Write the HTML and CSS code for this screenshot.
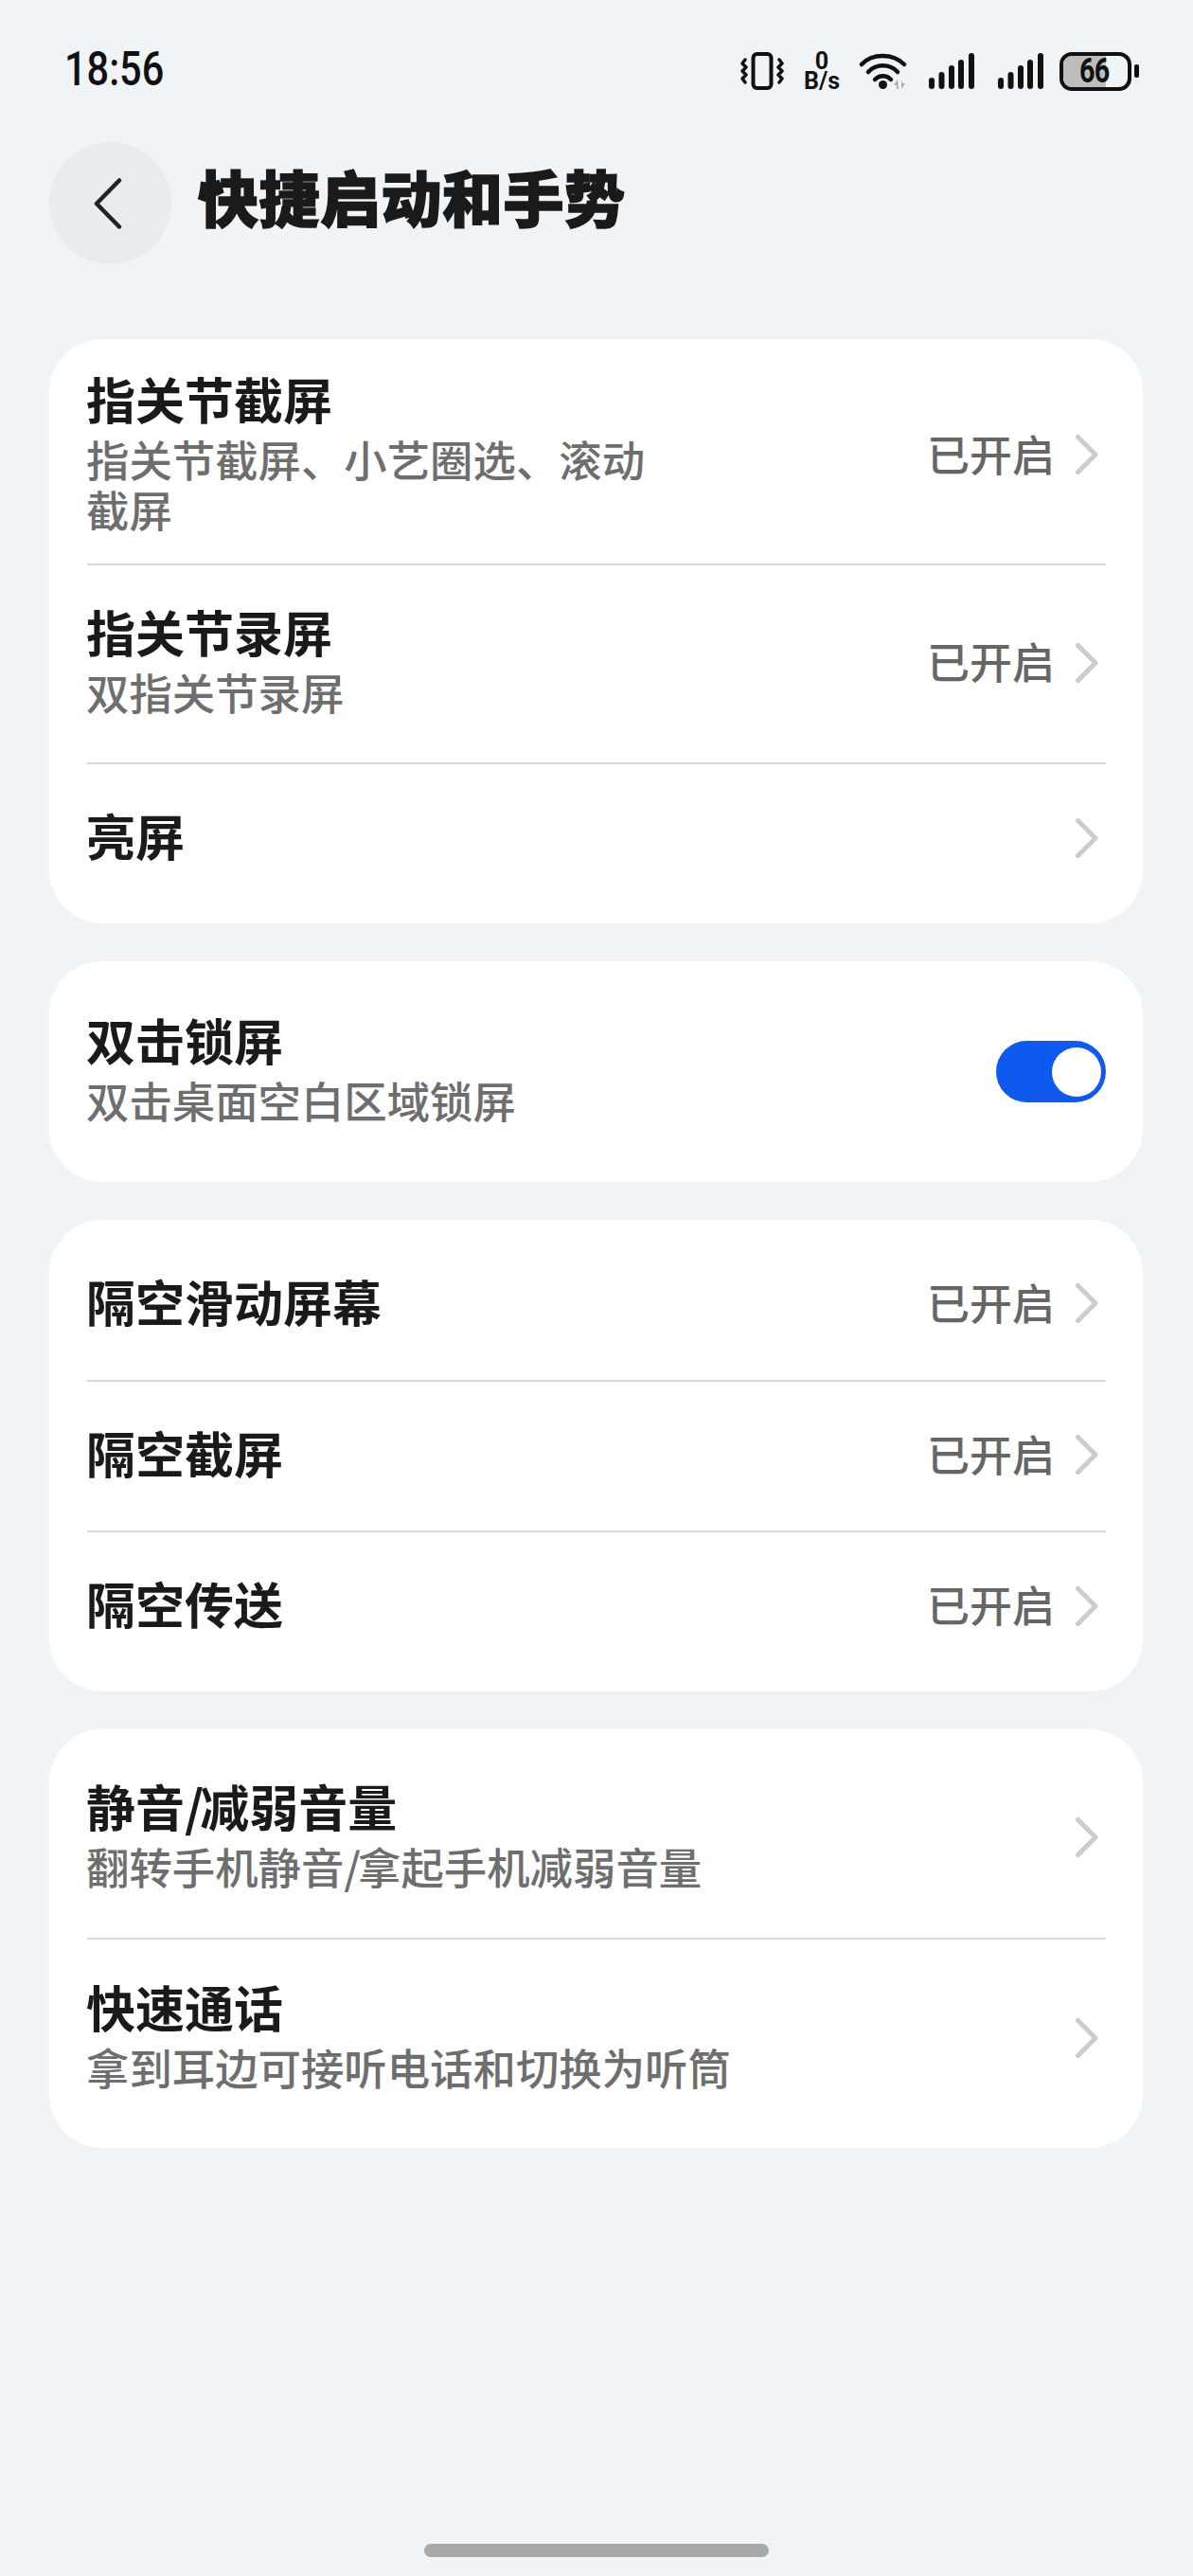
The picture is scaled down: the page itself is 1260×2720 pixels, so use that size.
FILE: index.html
```html
<!DOCTYPE html>
<html lang="zh-CN">
<head>
  <meta charset="UTF-8">
  <meta name="viewport" content="width=device-width, initial-scale=1.0">
  <title>快捷启动和手势</title>
  <link rel="stylesheet" href="styles.css">
</head>
<body>
  <div class="page">
    <div class="status">
      <span class="status__time">18:56</span>
      <div class="status__icons">
        <svg class="icon-vibrate" width="46" height="40" viewBox="0 0 46 40" fill="none" stroke="#111">
          <rect x="13.5" y="2" width="19" height="36" rx="4" stroke-width="4"/>
          <path d="M5 8l-3 4 4 4-4 4 4 4-4 4 3 4M41 8l3 4-4 4 4 4-4 4 4 4-3 4" stroke-width="3.500" stroke-linecap="round" stroke-linejoin="round"/>
        </svg>
        <div class="speed"><span>0</span><span>B/s</span></div>
        <svg class="icon-wifi" width="54" height="40" viewBox="0 0 54 40" fill="none" stroke="#111" stroke-width="4.5" stroke-linecap="round">
          <path d="M3 13C14 1 36 1 48 13"/>
          <path d="M10 21C18 12 33 12 41 21"/>
          <path d="M17 29C22 24 29 24 34 29"/>
          <circle cx="25.500" cy="34.500" r="4.500" fill="#111" stroke="none"/>
          <path d="M41 29l-4 6h3v4h2zM45 29v10l4-6h-3z" fill="#aaa" stroke="none"/>
        </svg>
        <svg class="icon-signal" width="48" height="40" viewBox="0 0 48 40" fill="#111">
          <rect x="0" y="27" width="6" height="12" rx="3"/>
          <rect x="10.500" y="21" width="6" height="18" rx="3"/>
          <rect x="21" y="14" width="6" height="25" rx="3"/>
          <rect x="31" y="8" width="6" height="31" rx="3"/>
          <rect x="42" y="1" width="6" height="38" rx="3"/>
        </svg>
        <svg class="icon-signal icon-signal--second" width="48" height="40" viewBox="0 0 48 40" fill="#111">
          <rect x="0" y="27" width="6" height="12" rx="3"/>
          <rect x="10.500" y="21" width="6" height="18" rx="3"/>
          <rect x="21" y="14" width="6" height="25" rx="3"/>
          <rect x="31" y="8" width="6" height="31" rx="3"/>
          <rect x="42" y="1" width="6" height="38" rx="3"/>
        </svg>
        <div class="battery">
          <div class="battery__body">
            <div class="battery__fill" style="width: 66%"></div>
            <span class="battery__num">66</span>
          </div>
          <div class="battery__nub"></div>
        </div>
      </div>
    </div>

    <header class="header">
      <div class="back">
        <svg width="30" height="54" viewBox="0 0 30 54" fill="none" stroke="#222" stroke-width="4.5" stroke-linecap="round" stroke-linejoin="round">
          <path d="M27 2.500L3 27l24 24.500"/>
        </svg>
      </div>
      <h1 class="header__title">快捷启动和手势</h1>
    </header>

    <main class="cards">
      <section class="card">
        <div class="row row--sub">
          <div class="row__text">
            <div class="row__title">指关节截屏</div>
            <div class="row__desc">指关节截屏、小艺圈选、滚动<br>截屏</div>
          </div>
          <div class="row__right"><span class="row__value">已开启</span><svg class="chev" width="24" height="42" viewBox="0 0 24 42" fill="none" stroke="#ccc" stroke-width="5" stroke-linecap="round" stroke-linejoin="round"><path d="M2.500 2.500L21 21 2.500 39.500"/></svg></div>
        </div>
        <div class="row row--sub">
          <div class="row__text">
            <div class="row__title">指关节录屏</div>
            <div class="row__desc">双指关节录屏</div>
          </div>
          <div class="row__right"><span class="row__value">已开启</span><svg class="chev" width="24" height="42" viewBox="0 0 24 42" fill="none" stroke="#ccc" stroke-width="5" stroke-linecap="round" stroke-linejoin="round"><path d="M2.500 2.500L21 21 2.500 39.500"/></svg></div>
        </div>
        <div class="row">
          <div class="row__text">
            <div class="row__title">亮屏</div>
          </div>
          <div class="row__right"><svg class="chev" width="24" height="42" viewBox="0 0 24 42" fill="none" stroke="#ccc" stroke-width="5" stroke-linecap="round" stroke-linejoin="round"><path d="M2.500 2.500L21 21 2.500 39.500"/></svg></div>
        </div>
      </section>

      <section class="card">
        <div class="row row--sub">
          <div class="row__text">
            <div class="row__title">双击锁屏</div>
            <div class="row__desc">双击桌面空白区域锁屏</div>
          </div>
          <div class="toggle"><div class="toggle__knob"></div></div>
        </div>
      </section>

      <section class="card">
        <div class="row">
          <div class="row__text">
            <div class="row__title">隔空滑动屏幕</div>
          </div>
          <div class="row__right"><span class="row__value">已开启</span><svg class="chev" width="24" height="42" viewBox="0 0 24 42" fill="none" stroke="#ccc" stroke-width="5" stroke-linecap="round" stroke-linejoin="round"><path d="M2.500 2.500L21 21 2.500 39.500"/></svg></div>
        </div>
        <div class="row">
          <div class="row__text">
            <div class="row__title">隔空截屏</div>
          </div>
          <div class="row__right"><span class="row__value">已开启</span><svg class="chev" width="24" height="42" viewBox="0 0 24 42" fill="none" stroke="#ccc" stroke-width="5" stroke-linecap="round" stroke-linejoin="round"><path d="M2.500 2.500L21 21 2.500 39.500"/></svg></div>
        </div>
        <div class="row">
          <div class="row__text">
            <div class="row__title">隔空传送</div>
          </div>
          <div class="row__right"><span class="row__value">已开启</span><svg class="chev" width="24" height="42" viewBox="0 0 24 42" fill="none" stroke="#ccc" stroke-width="5" stroke-linecap="round" stroke-linejoin="round"><path d="M2.500 2.500L21 21 2.500 39.500"/></svg></div>
        </div>
      </section>

      <section class="card">
        <div class="row row--sub">
          <div class="row__text">
            <div class="row__title">静音<span class="slash">/</span>减弱音量</div>
            <div class="row__desc">翻转手机静音<span class="slash slash--small">/</span>拿起手机减弱音量</div>
          </div>
          <div class="row__right"><svg class="chev" width="24" height="42" viewBox="0 0 24 42" fill="none" stroke="#ccc" stroke-width="5" stroke-linecap="round" stroke-linejoin="round"><path d="M2.500 2.500L21 21 2.500 39.500"/></svg></div>
        </div>
        <div class="row row--sub">
          <div class="row__text">
            <div class="row__title">快速通话</div>
            <div class="row__desc">拿到耳边可接听电话和切换为听筒</div>
          </div>
          <div class="row__right"><svg class="chev" width="24" height="42" viewBox="0 0 24 42" fill="none" stroke="#ccc" stroke-width="5" stroke-linecap="round" stroke-linejoin="round"><path d="M2.500 2.500L21 21 2.500 39.500"/></svg></div>
        </div>
      </section>
    </main>

    <div class="home-bar"></div>
  </div>
</body>
</html>
```

FILE: styles.css
```css
* {
  margin: 0;
  padding: 0;
  box-sizing: border-box;
}

html,
body {
  background: #f1f4f7;
}

body {
  font-family: "Noto Sans CJK SC", "Noto Sans", sans-serif;
  color: #1a1a1a;
}

.page {
  width: 1260px;
  height: 2720px;
  display: flex;
  flex-direction: column;
  overflow: hidden;
}

/* Status bar */

.status {
  height: 150px;
  padding: 54px 57px 0 68px;
  display: flex;
  justify-content: space-between;
  align-items: flex-start;
}

.status__time {
  font-family: "Roboto", sans-serif;
  font-weight: 500;
  font-size: 50px;
  line-height: 38px;
  color: #111;
  display: block;
  transform: scaleX(0.83);
  transform-origin: 0 50%;
}

.status__icons {
  display: flex;
  align-items: center;
  padding-left: 2px;
}

.speed {
  margin-left: 18px;
  width: 44px;
  display: flex;
  flex-direction: column;
  align-items: center;
  font-family: "Roboto", sans-serif;
  font-weight: 700;
  font-size: 25px;
  line-height: 21px;
  color: #111;
}

.icon-wifi {
  margin-left: 17px;
}

.icon-signal {
  margin-left: 20px;
}

.icon-signal--second {
  margin-left: 25px;
}

.battery {
  margin-left: 17px;
  display: flex;
  align-items: center;
  gap: 3px;
}

.battery__body {
  position: relative;
  width: 76px;
  height: 41px;
  border: 4px solid #111;
  border-radius: 13px;
  overflow: hidden;
  display: flex;
  align-items: center;
  justify-content: center;
}

.battery__fill {
  position: absolute;
  top: 0;
  left: 0;
  bottom: 0;
  background: #bdbdbd;
}

.battery__num {
  position: relative;
  font-family: "Roboto", sans-serif;
  font-weight: 700;
  font-size: 36px;
  line-height: 1;
  letter-spacing: -1px;
  color: #111;
  margin-right: 2px;
  transform: scaleX(0.8);
}

.battery__nub {
  width: 5px;
  height: 14px;
  background: #111;
  border-radius: 2px;
}

/* Header */

.header {
  height: 129px;
  padding-left: 52px;
  display: flex;
  align-items: center;
  gap: 28px;
}

.back {
  width: 129px;
  height: 129px;
  border-radius: 50%;
  background: #e8ecef;
  display: flex;
  align-items: center;
  justify-content: center;
}

.back svg {
  margin-right: 6px;
}

.header__title {
  font-size: 64px;
  font-weight: 900;
  line-height: 1;
  letter-spacing: 0.5px;
  margin-top: -18px;
  color: #1a1a1a;
  -webkit-text-stroke: 1.5px #1a1a1a;
}

/* Cards */

.cards {
  margin-top: 79px;
  padding: 0 53px 0 52px;
  display: flex;
  flex-direction: column;
  gap: 40px;
}

.card {
  background: #fff;
  border-radius: 56px;
  padding: 10px 39px 10px 40px;
}

.row {
  min-height: 159px;
  padding: 18px 0;
  display: flex;
  align-items: center;
  justify-content: space-between;
  border-top: 2px solid #d8d8d8;
}

.row:first-child {
  border-top: none;
}

.row:last-child {
  min-height: 160px;
}

.row--sub,
.row--sub:last-child {
  min-height: 210px;
}

.row--sub:last-child {
  min-height: 212px;
}

.row--sub:only-child {
  min-height: 213px;
}

.row__text {
  margin-left: -1px;
  padding-bottom: 8px;
}

.row--sub .row__text {
  padding-bottom: 13px;
}

.row__title {
  font-size: 52px;
  font-weight: 700;
  line-height: 70px;
  color: #1a1a1a;
}

.slash {
  letter-spacing: -6px;
  margin-right: 2px;
}

.slash--small {
  letter-spacing: -3px;
  margin-right: 0;
}

.row__desc {
  margin-top: 2px;
  font-size: 45.4px;
  font-weight: 500;
  line-height: 53px;
  color: #6e6e6e;
}

.row__right {
  display: flex;
  align-items: center;
  margin-bottom: 3px;
}

.row__value {
  margin-bottom: 4px;
  font-size: 45px;
  font-weight: 500;
  line-height: 53px;
  color: #666;
}

.chev {
  margin-left: 22px;
  margin-right: 8px;
}

.toggle {
  position: relative;
  width: 116px;
  height: 65px;
  border-radius: 33px;
  background: #0f59ee;
}

.toggle__knob {
  position: absolute;
  top: 7px;
  right: 5px;
  width: 52px;
  height: 52px;
  border-radius: 50%;
  background: #fff;
}

/* Home indicator */

.home-bar {
  margin: auto auto 20px;
  width: 364px;
  height: 14px;
  border-radius: 7px;
  background: #a9a9a9;
}
```
